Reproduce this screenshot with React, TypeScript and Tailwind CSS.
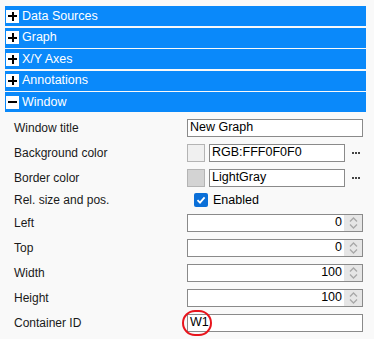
import type { ReactNode } from 'react'

const SECTIONS = ['Data Sources', 'Graph', 'X/Y Axes', 'Annotations', 'Window']

function SectionBar({ label, open }: { label: string; open: boolean }) {
  return (
    <div className="flex h-5 items-center bg-[#0a89fa] pl-[1px] text-[12.5px] text-white">
      <span className="relative flex h-[13px] w-[13px] items-center justify-center bg-white">
        <span className="absolute h-[2px] w-[9px] bg-black" />
        {!open && <span className="absolute h-[9px] w-[2px] bg-black" />}
      </span>
      <span className="ml-[3px] leading-none">{label}</span>
    </div>
  )
}

function Row({ label, children, h = 'h-[25px]' }: { label: string; children: ReactNode; h?: string }) {
  return (
    <div className={`flex items-center ${h}`}>
      <div className="w-[173px] text-[12px] text-[#1a1a1a]">{label}</div>
      <div className="flex w-[176px] items-center">{children}</div>
    </div>
  )
}

function TextBox({ value, className = 'w-full' }: { value: string; className?: string }) {
  return (
    <div className={`flex h-[18px] items-center border border-[#8a8a8a] bg-white pl-[2px] text-[12.5px] text-black ${className}`}>
      {value}
    </div>
  )
}

function ColorBox({ swatch, value }: { swatch: string; value: string }) {
  return (
    <>
      <div className={`h-[18px] w-[18px] border border-[#b4b4b4] ${swatch}`} />
      <TextBox value={value} className="ml-[4px] w-[136px]" />
      <span className="ml-[7px] flex gap-[1px]">
        <span className="h-[2px] w-[2px] bg-[#444]" />
        <span className="h-[2px] w-[2px] bg-[#444]" />
        <span className="h-[2px] w-[2px] bg-[#444]" />
      </span>
    </>
  )
}

function NumberBox({ value }: { value: number }) {
  return (
    <div className="flex h-[18px] w-full items-center border border-[#8a8a8a] bg-white text-[12.5px] text-black">
      <div className="flex-1 pr-[2px] text-right">{value}</div>
      <div className="flex h-full w-[18px] items-center justify-center bg-[#e6e6e6]">
        <svg width="9" height="14" viewBox="0 0 9 14" fill="none" stroke="#a8a8a8" strokeWidth="1.3">
          <path d="M1 5.5 L4.5 2 L8 5.5" />
          <path d="M1 8.5 L4.5 12 L8 8.5" />
        </svg>
      </div>
    </div>
  )
}

export default function App() {
  return (
    <div className="h-[339px] w-[374px] bg-[#f9f9f9] font-['Liberation_Sans',Arial,sans-serif]">
      <div className="flex flex-col gap-[1.5px] pl-[5px] pr-[8px] pt-[6px]">
        {SECTIONS.map((s) => (
          <SectionBar key={s} label={s} open={s === 'Window'} />
        ))}
      </div>
      <div className="pl-[14px] pt-[3px]">
        <Row label="Window title">
          <TextBox value="New Graph" />
        </Row>
        <Row label="Background color">
          <ColorBox swatch="bg-[#f0f0f0]" value="RGB:FFF0F0F0" />
        </Row>
        <Row label="Border color">
          <ColorBox swatch="bg-[#d3d3d3]" value="LightGray" />
        </Row>
        <Row label="Rel. size and pos." h="h-[20px]">
          <div className="ml-[7px] flex items-center gap-[5px] text-[12.5px] text-black">
            <span className="flex h-[14px] w-[14px] items-center justify-center rounded-[2px] bg-[#0a6fd8]">
              <svg width="10" height="10" viewBox="0 0 10 10" fill="none" stroke="white" strokeWidth="1.8">
                <path d="M1.5 5.2 L4 7.6 L8.6 2.4" />
              </svg>
            </span>
            Enabled
          </div>
        </Row>
        <Row label="Left">
          <NumberBox value={0} />
        </Row>
        <Row label="Top">
          <NumberBox value={0} />
        </Row>
        <Row label="Width">
          <NumberBox value={100} />
        </Row>
        <Row label="Height">
          <NumberBox value={100} />
        </Row>
        <Row label="Container ID">
          <div className="relative w-full">
            <TextBox value="W1" />
            <span className="absolute left-[-5px] top-[-4px] h-[26px] w-[30px] rounded-full border-2 border-[#e8141c]" />
          </div>
        </Row>
      </div>
    </div>
  )
}
